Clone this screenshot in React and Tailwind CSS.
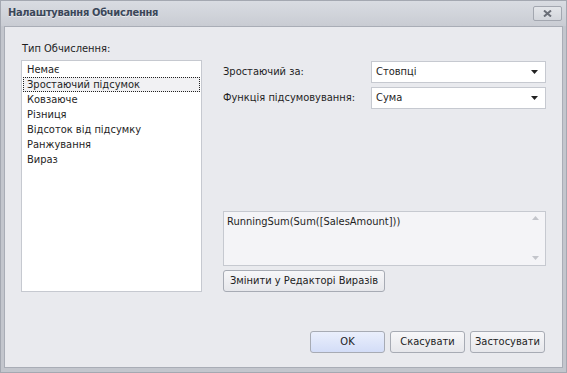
import { useState } from 'react';

const items = ['Немає', 'Зростаючий підсумок', 'Ковзаюче', 'Різниця', 'Відсоток від підсумку', 'Ранжування', 'Вираз'];

function Arrow({ up, className = '' }) {
  return (
    <svg width="7" height="4" viewBox="0 0 7 4" className={className}>
      <path d={up ? 'M0 4 L3.5 0 L7 4 Z' : 'M0 0 L7 0 L3.5 4 Z'} fill="currentColor" />
    </svg>
  );
}

function Combo({ value }) {
  return (
    <div className="w-[175px] h-[22px] bg-white border border-[#c6c9d0] flex items-center justify-between pl-[4px] pr-[7px]">
      <span>{value}</span>
      <Arrow className="text-[#222]" />
    </div>
  );
}

function Btn({ children, className = '' }) {
  return (
    <button className={`h-[22px] rounded-[3px] border border-[#a7abb4] bg-gradient-to-b from-[#f7f7f9] to-[#e6e7eb] text-[#222] ${className}`}>
      {children}
    </button>
  );
}

export default function App() {
  const [sel, setSel] = useState(1);

  return (
    <div className="w-[567px] h-[373px] flex flex-col bg-[#c3c6cd] border border-[#a4a8b1] text-[11px] text-[#1e1e1e]" style={{ fontFamily: '"DejaVu Sans Condensed", "Liberation Sans", Arial, sans-serif' }}>
      {/* title bar */}
      <div className="h-[25px] flex items-center justify-between pl-[7px] pr-[4px] bg-gradient-to-b from-[#d9dce2] to-[#c9ccd3]">
        <span className="font-bold text-[11px] tracking-[-0.3px] text-[#3b4759] [text-shadow:0_1px_0_#e8eaee]">Налаштування Обчислення</span>
        <div className="w-[29px] h-[15px] rounded-[2px] border border-[#a3a7b0] bg-gradient-to-b from-[#e4e6ea] to-[#d3d6dc] flex items-center justify-center">
          <svg width="9" height="7" viewBox="0 0 9 7">
            <path d="M1 0.5 L8 6.5 M8 0.5 L1 6.5" stroke="#6a6e77" strokeWidth="2" />
          </svg>
        </div>
      </div>

      {/* body */}
      <div className="flex-1 mx-[3px] mb-[4px] bg-[#e9eaee] border border-[#a9adb6] flex flex-col pt-[13px] pl-[16px] pr-[16px] pb-[14px]">
        <div className="flex-1 flex gap-[21px]">
          {/* left column */}
          <div className="w-[181px] flex flex-col">
            <div className="h-[20px] leading-[18px] pl-[1px]">Тип Обчислення:</div>
            <div className="h-[232px] bg-white border border-[#c6c9d0] pt-[1px] px-[1px]">
              {items.map((t, i) => (
                <div
                  key={t}
                  onClick={() => setSel(i)}
                  className={`h-[15px] leading-[13px] pl-[3px] border border-dotted ${i === sel ? 'border-[#222] bg-[#f1f1f3]' : 'border-transparent'}`}
                >
                  {t}
                </div>
              ))}
            </div>
          </div>

          {/* right column */}
          <div className="flex-1 flex flex-col pt-[21px]">
            <div className="flex items-center h-[22px]">
              <span className="w-[148px]">Зростаючий за:</span>
              <Combo value="Стовпці" />
            </div>
            <div className="flex items-center h-[22px] mt-[4px]">
              <span className="w-[148px]">Функція підсумовування:</span>
              <Combo value="Сума" />
            </div>

            <div className="mt-[102px] w-[323px] h-[55px] bg-[#f4f4f7] border border-[#c6c9d0] flex justify-between pl-[3px] pr-[6px] pt-[2px] pb-[5px]">
              <span>RunningSum(Sum([SalesAmount]))</span>
              <div className="flex flex-col justify-between pt-[2px] text-[#c3c5cb]">
                <Arrow up />
                <Arrow />
              </div>
            </div>
            <div className="mt-[4px]">
              <Btn className="w-[162px]">Змінити у Редакторі Виразів</Btn>
            </div>
          </div>
        </div>

        {/* bottom buttons */}
        <div className="flex justify-end gap-[5px] pr-[1px]">
          <button className="w-[75px] h-[22px] rounded-[3px] border border-[#a7abb4] bg-gradient-to-b from-[#eaeffc] to-[#d3ddf7] text-[#222]">OK</button>
          <Btn className="w-[75px]">Скасувати</Btn>
          <Btn className="w-[75px]">Застосувати</Btn>
        </div>
      </div>
    </div>
  );
}
